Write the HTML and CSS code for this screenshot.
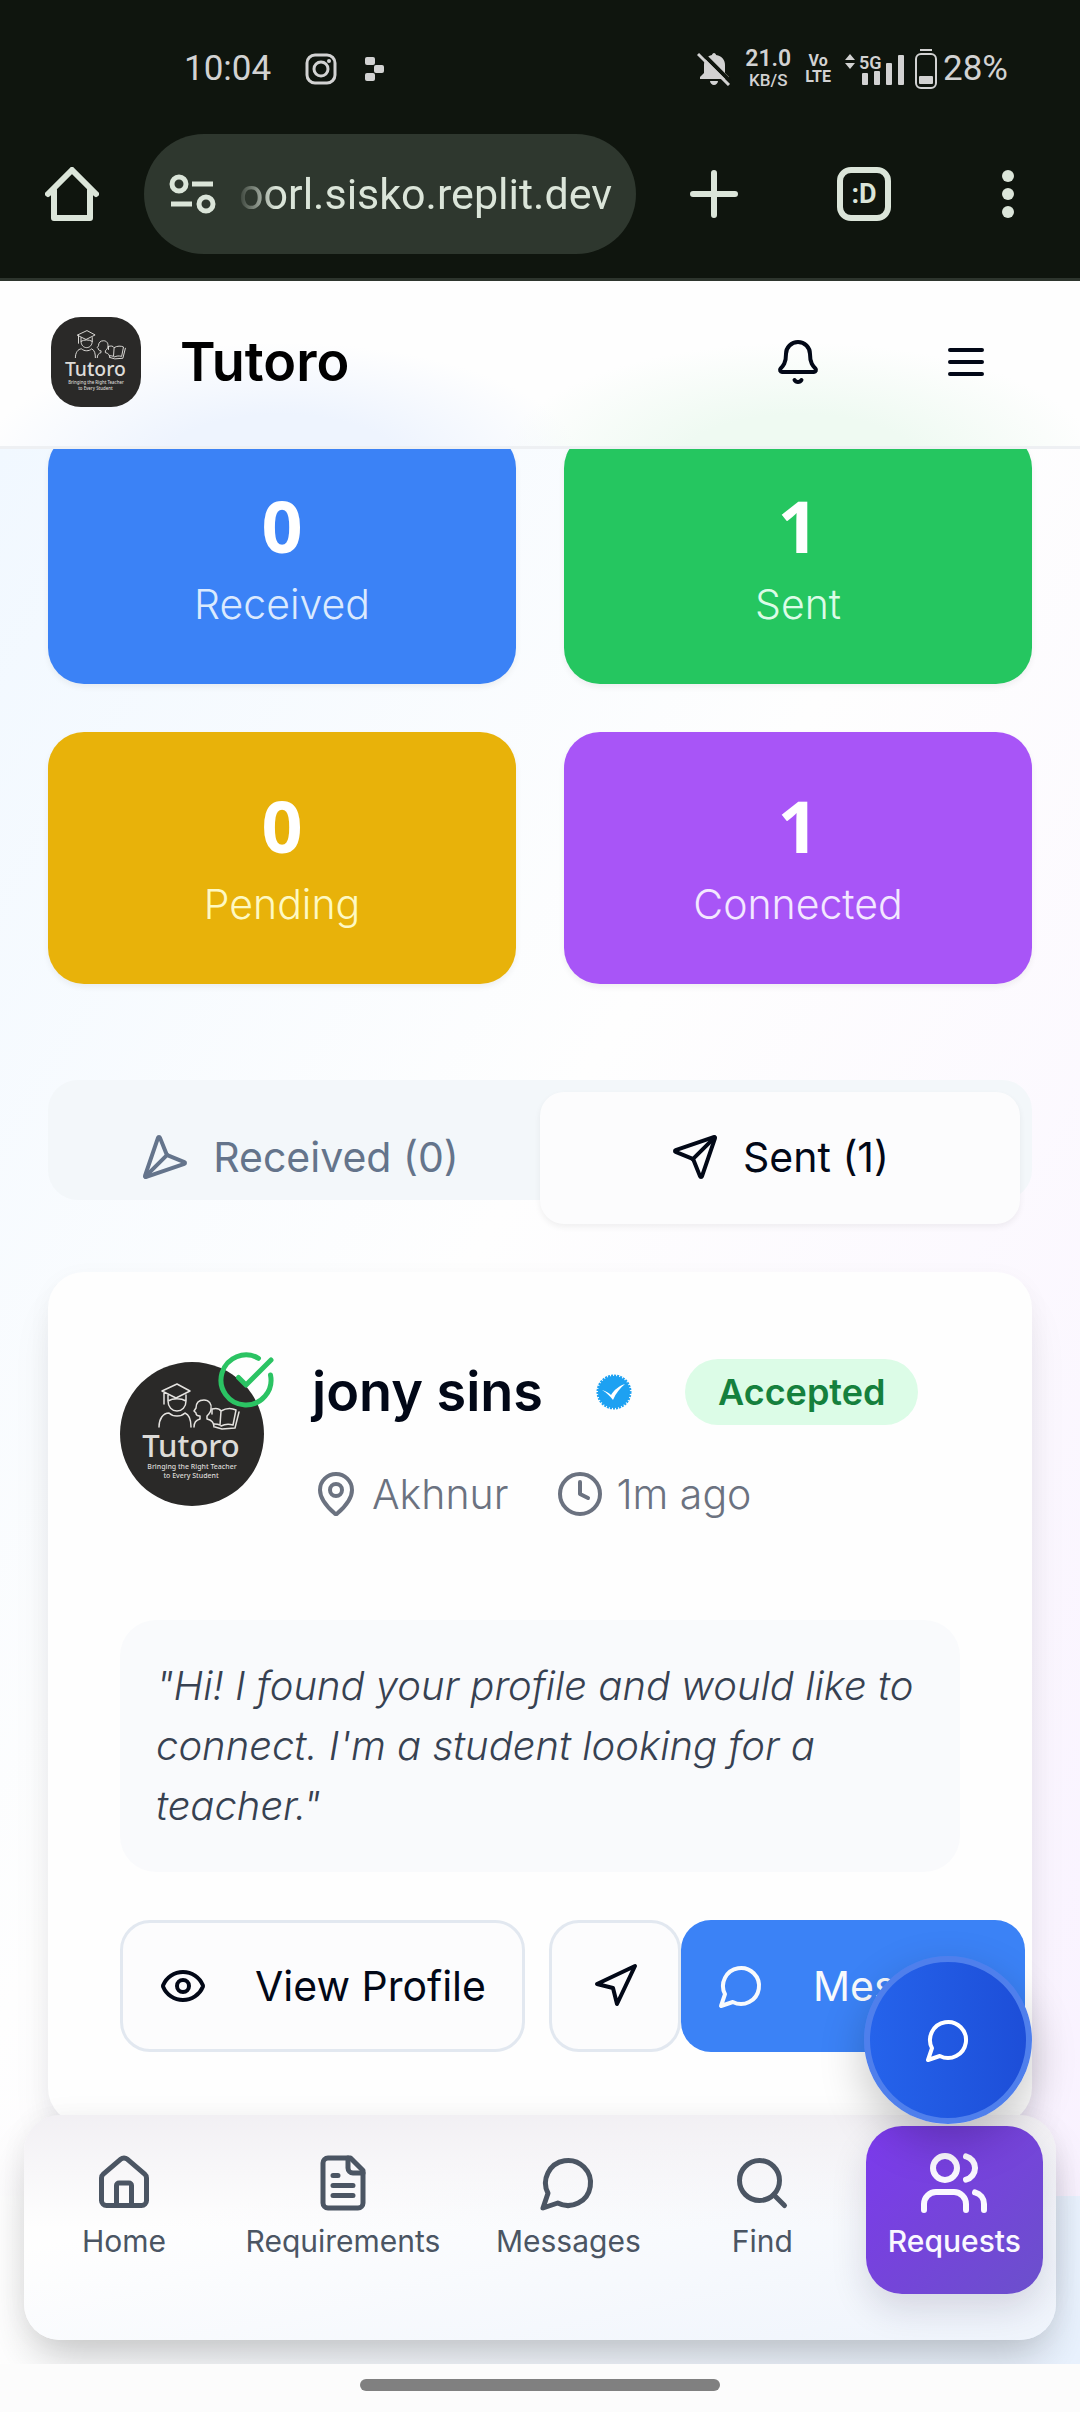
FILE: index.html
```html
<!DOCTYPE html>
<html lang="en">
<head>
<meta charset="utf-8">
<meta name="viewport" content="width=device-width, initial-scale=1">
<title>Tutoro – Requests</title>
<link rel="stylesheet" href="styles.css">
</head>
<body>
<svg class="sprite" aria-hidden="true">
  <symbol id="logo-art" viewBox="0 0 144 144">
    <rect width="144" height="144" fill="#2a2928"/>
    <g fill="none" stroke="#e4e2df" stroke-width="1.5" stroke-linecap="round" stroke-linejoin="round">
      <path d="M57 22 42 29l14 7 14-7zM44 30v12M48 33v6c5-3 13-3 18 0v-6M48 39c0 6 4 10 9 10s9-4 9-10"/>
      <path d="M39 65c0-8 4-14 10-14 4 4 12 4 16 0 5 2 6 8 6 14"/>
      <path d="M74 65c0-4 2-7 6-8v-3c-2 0-4 0-4-3l-2-2 2-3c0-5 3-8 8-8 5 0 8 4 7 9 0 3-2 5-4 7v3c5 1 7 4 7 8"/>
      <path d="M92 47c4-1 7-1 9 2 5-3 11-3 15-1l-3 15c-4-1-8-1-12 1M101 49l-1 14c-2-1-4-1-6-1M92 47v5M95 65l7 2 13-1 4-16"/>
    </g>
  </symbol>
  <symbol id="i-send" viewBox="0 0 24 24"><path d="M14.536 21.686a.5.5 0 0 0 .937-.024l6.5-19a.496.496 0 0 0-.635-.635l-19 6.5a.5.5 0 0 0-.024.937l7.93 3.18a2 2 0 0 1 1.112 1.11z"/><path d="m21.854 2.147-10.94 10.939"/></symbol>
  <symbol id="i-chat" viewBox="0 0 24 24"><path d="M7.9 20A9 9 0 1 0 4 16.1L2 22Z"/></symbol>
</svg>

<div class="chrome">
  <div class="status">
    <span class="clock">10:04</span>
    <svg class="insta" width="32" height="32" viewBox="0 0 32 32" fill="none" stroke="#d2d2d2" stroke-width="3"><rect x="2" y="2" width="28" height="28" rx="8"/><circle cx="16" cy="16" r="7"/><circle cx="24" cy="8" r="2" fill="#d2d2d2" stroke="none"/></svg>
    <svg class="blocks" width="20" height="24" viewBox="0 0 20 24" fill="#d2d2d2"><rect width="10" height="8" rx="2"/><rect x="9" y="8" width="10" height="8" rx="2"/><rect y="16" width="10" height="8" rx="2"/></svg>
    <svg class="muted" width="34" height="34" viewBox="0 0 34 34"><path d="M17 1c1 0 2 1 2 2 6 1 9 5 9 10v8l4 4v2H3v-2l4-4v-8c0-5 3-9 8-10 0-1 1-2 2-2zM13 29h8c0 2-2 4-4 4s-4-2-4-4z" fill="#d2d2d2"/><path d="M3 -1 36 32" stroke="#0f150e" stroke-width="4"/><path d="M1 2 32 33" stroke="#d2d2d2" stroke-width="3"/></svg>
    <span class="speed"><b>21.0</b><small>KB/S</small></span>
    <span class="volte"><span>Vo</span><span>LTE</span></span>
    <svg class="signal" width="62" height="34" viewBox="0 0 62 34" fill="#d2d2d2"><path d="M0 8l5-6 5 6zM0 11h10l-5 6z"/><text x="14" y="17" class="five-g">5G</text><rect x="17" y="21" width="6" height="12" rx="1"/><rect x="29" y="19" width="6" height="14" rx="1"/><rect x="41" y="11" width="6" height="22" rx="1"/><rect x="53" y="3" width="6" height="30" rx="1"/></svg>
    <svg class="battery" width="22" height="40" viewBox="0 0 22 40"><rect x="5" width="12" height="2" fill="#d2d2d2"/><rect x="1" y="5" width="20" height="34" rx="5" fill="none" stroke="#d2d2d2" stroke-width="2"/><rect x="4" y="27" width="14" height="8" rx="1" fill="#d2d2d2"/></svg>
    <span>28%</span>
  </div>
  <div class="toolbar">
    <button class="tool tool-home" aria-label="Home page"><svg width="54" height="54" viewBox="0 0 54 54" fill="none" stroke="#dbe5d9" stroke-width="6" stroke-linecap="round" stroke-linejoin="round"><path d="M3 27 27 3l24 24M9 23v28h36V23"/></svg></button>
    <div class="address">
      <svg width="48" height="48" viewBox="0 0 48 48" fill="none" stroke="#dbe5d9" stroke-width="5"><circle cx="11" cy="14" r="7"/><path d="M24 14h21M3 34h21"/><circle cx="38" cy="34" r="7"/></svg>
      <input class="url" type="text" value="oorl.sisko.replit.dev" aria-label="Address">
    </div>
    <button class="tool tool-new" aria-label="New tab"><svg width="48" height="48" viewBox="0 0 48 48" stroke="#dbe5d9" stroke-width="6" stroke-linecap="round"><path d="M24 3v42M3 24h42"/></svg></button>
    <button class="tool" aria-label="Tabs"><span class="tabs-count">:D</span></button>
    <button class="tool" aria-label="Menu"><svg width="12" height="48" viewBox="0 0 12 48" fill="#dbe5d9"><circle cx="6" cy="6" r="6"/><circle cx="6" cy="24" r="6"/><circle cx="6" cy="42" r="6"/></svg></button>
  </div>
</div>

<header class="header">
  <svg class="brand-logo" viewBox="0 0 144 144" role="img" aria-label="Tutoro logo">
    <use href="#logo-art"/>
    <text x="71" y="95" class="logo-word">Tutoro</text>
    <text x="72" y="107" class="logo-line">Bringing the Right Teacher</text>
    <text x="71" y="116" class="logo-line">to Every Student</text>
  </svg>
  <h1 class="brand">Tutoro</h1>
  <div class="header-actions">
    <button class="header-btn" aria-label="Notifications"><svg class="icon" viewBox="0 0 24 24"><path d="M10.268 21a2 2 0 0 0 3.464 0"/><path d="M3.262 15.326A1 1 0 0 0 4 17h16a1 1 0 0 0 .74-1.673C19.41 13.956 18 12.499 18 8A6 6 0 0 0 6 8c0 4.499-1.411 5.956-2.738 7.326"/></svg></button>
    <button class="header-btn" aria-label="Open menu"><svg class="icon" viewBox="0 0 24 24"><path d="M4 6h16M4 12h16M4 18h16"/></svg></button>
  </div>
</header>

<main class="main">
  <section class="stats">
    <div class="stat blue"><strong>0</strong><span>Received</span></div>
    <div class="stat green"><strong>1</strong><span>Sent</span></div>
    <div class="stat yellow"><strong>0</strong><span>Pending</span></div>
    <div class="stat purple"><strong>1</strong><span>Connected</span></div>
  </section>

  <div class="tabs" role="tablist">
    <button class="tab" role="tab" aria-selected="false"><svg class="icon flipped"><use href="#i-send"/></svg>Received (0)</button>
    <button class="tab active" role="tab" aria-selected="true"><svg class="icon"><use href="#i-send"/></svg>Sent (1)</button>
  </div>

  <article class="card">
    <div class="person">
      <div class="avatar">
        <svg class="avatar-pic" viewBox="0 0 144 144" role="img" aria-label="jony sins">
          <use href="#logo-art"/>
          <text x="71" y="95" class="logo-word">Tutoro</text>
          <text x="72" y="107" class="logo-line">Bringing the Right Teacher</text>
          <text x="71" y="116" class="logo-line">to Every Student</text>
        </svg>
        <svg class="avatar-check" viewBox="0 0 24 24"><path d="M21.801 10A10 10 0 1 1 17 3.335"/><path d="m9 11 3 3L22 4"/></svg>
      </div>
      <div class="about">
        <div class="name-row">
          <h2 class="name">jony sins</h2>
          <svg class="verified" viewBox="0 0 36 36"><circle cx="18" cy="18" r="16" fill="#1da1f2"/><circle cx="18" cy="18" r="16" fill="none" stroke="#1da1f2" stroke-width="3" stroke-dasharray="2 1"/><path d="M6 16c4 1 7 3 9 5 3-5 8-9 14-11-5 4-9 9-12 16-3-4-6-7-11-10z" fill="#fff"/></svg>
          <span class="badge">Accepted</span>
        </div>
        <div class="meta">
          <span><svg class="icon" viewBox="0 0 24 24"><path d="M20 10c0 4.993-5.539 10.193-7.399 11.799a1 1 0 0 1-1.202 0C9.539 20.193 4 14.993 4 10a8 8 0 0 1 16 0"/><circle cx="12" cy="10" r="3"/></svg>Akhnur</span>
          <span><svg class="icon" viewBox="0 0 24 24"><circle cx="12" cy="12" r="10"/><path d="M12 6v6l4 2"/></svg>1m ago</span>
        </div>
      </div>
    </div>
    <blockquote class="quote">"Hi! I found your profile and would like to connect. I'm a student looking for a teacher."</blockquote>
    <div class="actions">
      <button class="btn"><svg class="icon" viewBox="0 0 24 24"><path d="M2.062 12.348a1 1 0 0 1 0-.696 10.75 10.75 0 0 1 19.876 0 1 1 0 0 1 0 .696 10.75 10.75 0 0 1-19.876 0"/><circle cx="12" cy="12" r="3"/></svg>View Profile</button>
      <div class="btn-pair">
        <button class="btn square" aria-label="Directions"><svg class="icon" viewBox="0 0 24 24"><path d="M3 11 22 2l-9 19-2-8z"/></svg></button>
        <button class="btn primary"><svg class="icon"><use href="#i-chat"/></svg>Message</button>
      </div>
    </div>
  </article>

  <nav class="nav">
    <a class="nav-item" href="#home"><svg class="nav-icon" viewBox="0 0 24 24"><path d="M15 21v-8a1 1 0 0 0-1-1h-4a1 1 0 0 0-1 1v8"/><path d="M3 10a2 2 0 0 1 .709-1.528l7-5.999a2 2 0 0 1 2.582 0l7 5.999A2 2 0 0 1 21 10v9a2 2 0 0 1-2 2H5a2 2 0 0 1-2-2z"/></svg>Home</a>
    <a class="nav-item" href="#requirements"><svg class="nav-icon" viewBox="0 0 24 24"><path d="M15 2H6a2 2 0 0 0-2 2v16a2 2 0 0 0 2 2h12a2 2 0 0 0 2-2V7Z"/><path d="M14 2v4a2 2 0 0 0 2 2h4M10 9H8M16 13H8M16 17H8"/></svg>Requirements</a>
    <a class="nav-item" href="#messages"><svg class="nav-icon"><use href="#i-chat"/></svg>Messages</a>
    <a class="nav-item" href="#find"><svg class="nav-icon" viewBox="0 0 24 24"><circle cx="11" cy="11" r="8"/><path d="m21 21-4.3-4.3"/></svg>Find</a>
    <a class="nav-item current" href="#requests"><svg class="nav-icon" viewBox="0 0 24 24"><path d="M16 21v-2a4 4 0 0 0-4-4H6a4 4 0 0 0-4 4v2"/><circle cx="9" cy="7" r="4"/><path d="M22 21v-2a4 4 0 0 0-3-3.870M16 3.130a4 4 0 0 1 0 7.750"/></svg>Requests</a>
  </nav>
  <button class="fab" aria-label="Open chat"><svg class="icon"><use href="#i-chat"/></svg></button>
</main>

<div class="gesture"><span></span></div>
</body>
</html>
```
FILE: styles.css
```css
* { box-sizing: border-box; }

body {
  margin: 0;
  min-height: 100vh;
  display: flex;
  flex-direction: column;
  font-family: "Inter", "Noto Sans", sans-serif;
  font-size: 41px;
  line-height: 60px;
  color: #020817;
  background: #fcfcfc;
}

button, input {
  margin: 0;
  padding: 0;
  border: 0;
  background: none;
  font: inherit;
  color: inherit;
}

h1, h2, blockquote { margin: 0; }

.sprite { position: absolute; width: 0; height: 0; }
.logo-word { font: 500 31px "Noto Sans", sans-serif; fill: #dddbd8; text-anchor: middle; }
.logo-line { font: 500 7px "Noto Sans", sans-serif; fill: #dddbd8; text-anchor: middle; }

.icon, .nav-icon, .avatar-check {
  flex: none;
  width: 48px;
  height: 48px;
  fill: none;
  stroke: currentColor;
  stroke-width: 2;
  stroke-linecap: round;
  stroke-linejoin: round;
}

/* Phone status bar and browser toolbar */
.chrome {
  background: #0f150e;
  border-bottom: 3px solid #2d352d;
  font-family: "Roboto", sans-serif;
}

.status {
  display: flex;
  align-items: center;
  height: 110px;
  padding: 27px 72px 0 184px;
  font-size: 35px;
  line-height: 40px;
  color: #d2d2d2;
}
.insta { margin-left: 34px; }
.blocks { margin-left: 28px; }
.muted { margin-left: auto; }
.speed { display: flex; flex-direction: column; align-items: center; margin-left: 14px; }
.speed b { font-size: 23px; line-height: 22px; font-weight: 600; }
.speed small { font-size: 17px; line-height: 20px; font-weight: 500; }
.volte { display: flex; flex-direction: column; align-items: center; margin: 0 14px; font-size: 16px; line-height: 16px; font-weight: 700; }
.five-g { font: 600 18px "Roboto", sans-serif; }
.battery { margin: 0 6px 0 8px; }

.toolbar { display: flex; align-items: center; height: 168px; }
.tool { display: flex; align-items: center; justify-content: center; width: 144px; height: 120px; }
.tool-new { width: 156px; }
.address {
  flex: 1;
  min-width: 0;
  display: flex;
  align-items: center;
  gap: 20px;
  height: 120px;
  padding: 0 24px;
  border-radius: 60px;
  background: #2e372e;
}
.address svg { flex: none; }
.url {
  flex: 1;
  min-width: 0;
  font-size: 43px;
  text-align: right;
  color: #dbe5d9;
  -webkit-mask-image: linear-gradient(to right, transparent, #000 40px);
  mask-image: linear-gradient(to right, transparent, #000 40px);
}
.tabs-count {
  width: 54px;
  height: 54px;
  border: 6px solid #dbe5d9;
  border-radius: 14px;
  font-size: 27px;
  line-height: 42px;
  font-weight: 700;
  color: #dbe5d9;
}

/* App header */
.header {
  display: flex;
  align-items: center;
  gap: 39px;
  height: 168px;
  padding: 0 54px 3px 51px;
  border-bottom: 3px solid #eef0f3;
  background:
    radial-gradient(ellipse 300px 120px at 26% 110%, #eef4fe 40%, transparent),
    radial-gradient(ellipse 300px 120px at 74% 110%, #effaf2 40%, transparent),
    #fefefe;
}
.brand-logo { width: 90px; height: 90px; border-radius: 30px; }
.brand { flex: 1; font-size: 54px; line-height: 72px; font-weight: 600; color: #000; }
.header-actions { display: flex; gap: 48px; }
.header-btn { display: flex; align-items: center; justify-content: center; width: 120px; height: 120px; }

/* Scrolled content */
.main {
  position: relative;
  flex: 1;
  padding: 0 48px 240px;
  overflow: hidden;
  background:
    linear-gradient(to bottom right, #f1f8ff, #fefefe 45%, #f9f2ff) top / 100% calc(100% - 168px) no-repeat,
    linear-gradient(to right, #fefefe, #e9f2fe);
}

.stats {
  display: grid;
  grid-template-columns: 1fr 1fr;
  gap: 48px;
  margin-top: -17px;
}
.stat {
  display: flex;
  flex-direction: column;
  align-items: center;
  gap: 4px;
  padding: 48px 48px 50px;
  border-radius: 36px;
  box-shadow: 0 3px 6px rgba(0, 0, 0, .06);
  font-weight: 300;
}
.stat strong { font: 700 72px/90px "Noto Sans", sans-serif; color: #fff; }
.blue { background: #3b82f6; color: #dbeafe; }
.green { background: #25c660; color: #dcfce7; }
.yellow { background: #e8b20a; color: #fef9c3; }
.purple { background: #a855f7; color: #f3e8ff; }

.tabs {
  display: grid;
  grid-template-columns: 1fr 1fr;
  height: 120px;
  margin-top: 96px;
  padding: 12px;
  border-radius: 30px;
  background: #f3f7fa;
}
.tab {
  display: flex;
  align-items: center;
  justify-content: center;
  gap: 24px;
  height: 132px;
  padding-bottom: 3px;
  border-radius: 24px;
  color: #64748b;
}
.tab.active { background: #fcfcfd; color: #020817; box-shadow: 0 3px 6px rgba(0, 0, 0, .06); }
.flipped { transform: rotate(180deg); }

.card {
  margin-top: 72px;
  padding: 72px;
  border-radius: 36px;
  background: #fefefe;
  box-shadow: 0 30px 45px -9px rgba(20, 10, 40, .1), 0 6px 24px rgba(20, 10, 40, .04);
}
.person { display: flex; align-items: center; gap: 48px; }
.avatar { position: relative; flex: none; width: 144px; height: 144px; }
.avatar-pic { width: 144px; height: 144px; border-radius: 50%; }
.avatar-check { position: absolute; top: -12px; right: -12px; width: 60px; height: 60px; color: #2bc363; }
.about { display: flex; flex-direction: column; gap: 24px; }
.name-row { display: flex; align-items: center; gap: 53px; height: 96px; }
.name { font-size: 54px; line-height: 84px; font-weight: 600; white-space: nowrap; }
.verified { flex: none; width: 36px; height: 36px; }
.badge {
  padding: 9px 33px;
  border-radius: 33px;
  background: #dcfce7;
  font-size: 36px;
  line-height: 48px;
  font-weight: 600;
  color: #15803d;
}
.meta { display: flex; gap: 48px; font-weight: 300; color: #6b7280; }
.meta span { display: flex; align-items: center; gap: 12px; }

.quote {
  margin-top: 96px;
  padding: 36px;
  border-radius: 36px;
  background: #f9fafc;
  font-size: 40px;
  font-weight: 300;
  font-style: italic;
  color: #374151;
}

.actions { display: flex; gap: 24px; margin-top: 48px; }
.btn-pair { display: flex; }
.btn {
  display: flex;
  flex: none;
  align-items: center;
  gap: 48px;
  height: 132px;
  padding: 0 36px;
  border: 3px solid #e2e8f0;
  border-radius: 30px;
  background: #fcfcfd;
  white-space: nowrap;
}
.btn.square { width: 132px; padding: 0; justify-content: center; }
.btn.primary { border: 0; background: #3b82f6; color: #f8fafc; }

/* Floating elements */
.nav {
  position: absolute;
  left: 24px;
  right: 24px;
  bottom: 24px;
  display: flex;
  justify-content: space-between;
  height: 225px;
  padding: 11px 13px 0 16px;
  border-radius: 36px;
  background:
    linear-gradient(to bottom, rgba(241, 239, 243, .95), rgba(252, 252, 254, 0) 50%),
    linear-gradient(to bottom right, #fefefe 30%, #eff4fc);
  box-shadow: 0 24px 45px -9px rgba(0, 0, 0, .22), 0 0 30px rgba(0, 0, 0, .04);
}
.nav-item {
  display: flex;
  flex-direction: column;
  align-items: center;
  gap: 6px;
  min-width: 168px;
  height: 168px;
  padding: 27px 18px 0;
  border-radius: 36px;
  font-size: 30px;
  line-height: 45px;
  font-weight: 400;
  color: #4b5563;
  text-decoration: none;
}
.nav-icon { width: 60px; height: 60px; }
.nav-item.current {
  padding: 21px 22px 0;
  gap: 0;
  background: linear-gradient(135deg, #7c3aed, #7544da 50%, #6b50cc);
  box-shadow: 0 15px 36px rgba(30, 20, 60, .14);
  font-weight: 500;
  color: #faf8ff;
}
.current .nav-icon { width: 72px; height: 72px; }

.fab {
  position: absolute;
  right: 48px;
  bottom: 240px;
  display: flex;
  align-items: center;
  justify-content: center;
  width: 168px;
  height: 168px;
  border: 6px solid #4f7fec;
  border-radius: 50%;
  background: linear-gradient(to right, #2563eb, #1d4ed8);
  box-shadow: 0 18px 45px rgba(0, 0, 0, .22);
  color: #fff;
}

/* System gesture bar */
.gesture { display: flex; justify-content: center; height: 48px; padding-top: 15px; background: #fcfcfc; }
.gesture span { width: calc(100% / 3); height: 12px; border-radius: 6px; background: #808080; }
```
